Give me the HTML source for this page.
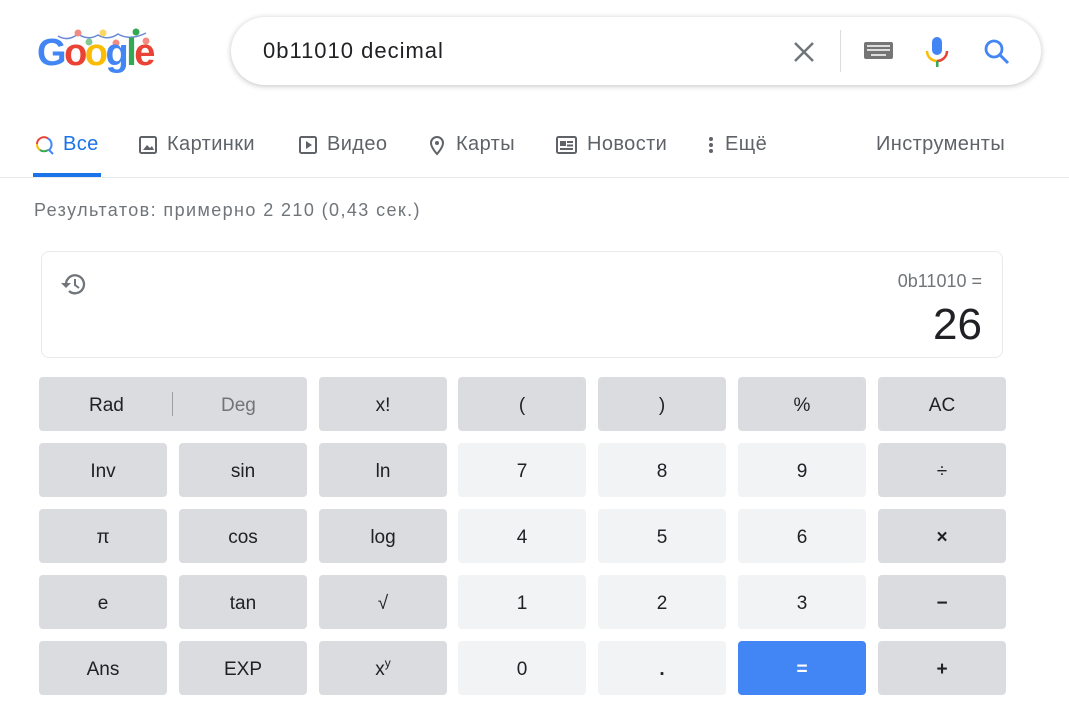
<!DOCTYPE html>
<html><head><meta charset="utf-8"><style>
*{margin:0;padding:0;box-sizing:border-box}
body{width:1069px;height:713px;background:#fff;font-family:"Liberation Sans",Arial,sans-serif;position:relative;overflow:hidden;color:#202124}
.abs{position:absolute}
.logo{left:37px;top:32px;font-size:38px;font-weight:bold;letter-spacing:-2.5px}
.sb{left:231px;top:17px;width:810px;height:68px;border-radius:34px;background:#fff;box-shadow:0 1px 6px rgba(32,33,36,.28)}
.q{left:263px;top:38px;font-size:22px;color:#202124;letter-spacing:1px}
.tab{top:133px;font-size:20px;color:#5f6368;display:flex;align-items:center;gap:9px;letter-spacing:0.4px}
.line{left:0;top:177px;width:1069px;height:1px;background:#e8eaed}
.stats{left:34px;top:200px;font-size:18px;color:#70757a;letter-spacing:1.4px}
.disp{left:41px;top:251px;width:962px;height:107px;border:1px solid #e8eaed;border-radius:8px}
.b{position:absolute;height:54px;width:128px;border-radius:4px;background:#dadce0;display:flex;align-items:center;justify-content:center;font-size:19px;color:#202124;padding-top:3px}
.l{background:#f1f3f4}
</style></head><body>
<svg class="abs" style="left:56px;top:26px" width="100" height="22"><path d="M2 10 Q12 16 22 8 Q32 15 42 9 Q52 15 62 8 Q74 15 90 7" stroke="#6b8ad6" fill="none" stroke-width="1.5"/><circle cx="22" cy="7" r="3.5" fill="#f28b82"/><circle cx="47" cy="7" r="3.5" fill="#fdd663"/><circle cx="33" cy="16" r="3.5" fill="#81c995"/><circle cx="60" cy="17" r="3.5" fill="#f28b82"/><circle cx="80" cy="6" r="3.5" fill="#34a853"/><circle cx="90" cy="15" r="3.5" fill="#f28b82"/></svg>
<div class="abs logo"><span style="color:#4285f4">G</span><span style="color:#ea4335">o</span><span style="color:#fbbc05">o</span><span style="color:#4285f4">g</span><span style="color:#34a853">l</span><span style="color:#ea4335">e</span></div>
<div class="abs sb"></div>
<div class="abs q">0b11010 decimal</div>
<svg class="abs" style="left:792px;top:40px" width="24" height="24"><path d="M3 3L21 21M21 3L3 21" stroke="#70757a" stroke-width="2.5"/></svg>
<div class="abs" style="left:840px;top:30px;width:1px;height:42px;background:#dadce0"></div>
<svg class="abs" style="left:864px;top:40px" width="30" height="20"><rect x="0" y="2" width="29" height="17" rx="2" fill="#757575"/><g fill="#ddd"><rect x="3" y="5" width="23" height="2"/><rect x="3" y="9" width="23" height="2"/><rect x="7" y="14" width="15" height="2"/></g></svg>
<svg class="abs" style="left:924px;top:36px" width="26" height="32"><rect x="8" y="1" width="10" height="18" rx="5" fill="#4285f4"/><path d="M3 15a10 10 0 0 0 10 10" stroke="#fbbc05" stroke-width="2.5" fill="none"/><path d="M13 25a10 10 0 0 0 10-10" stroke="#ea4335" stroke-width="2.5" fill="none"/><rect x="12" y="25" width="2.5" height="6" fill="#34a853"/></svg>
<svg class="abs" style="left:982px;top:37px" width="30" height="30"><circle cx="12" cy="12" r="8" stroke="#4285f4" stroke-width="2.8" fill="none"/><path d="M18 18l8 8" stroke="#4285f4" stroke-width="3"/></svg>

<div class="abs tab" style="left:34px;color:#1a73e8"><svg width="20" height="20"><path d="M14 3.5A7 7 0 0 0 3 9" stroke="#ea4335" stroke-width="2" fill="none"/><path d="M3 9a7 7 0 0 0 3 6" stroke="#fbbc05" stroke-width="2" fill="none"/><path d="M6 15a7 7 0 0 0 8 0" stroke="#34a853" stroke-width="2" fill="none"/><path d="M14 3.5a7 7 0 0 1 1 11.5l4 4" stroke="#4285f4" stroke-width="2" fill="none"/></svg>Все</div>
<div class="abs" style="left:33px;top:173px;width:68px;height:4px;background:#1a73e8"></div>
<div class="abs tab" style="left:138px"><svg width="20" height="20"><rect x="2" y="2" width="16" height="16" rx="1.5" stroke="#5f6368" stroke-width="2" fill="none"/><path d="M5 15l4-5 3 3 2-2 2 4z" fill="#5f6368"/></svg>Картинки</div>
<div class="abs tab" style="left:298px"><svg width="20" height="20"><rect x="2" y="2" width="16" height="16" rx="1.5" stroke="#5f6368" stroke-width="2" fill="none"/><path d="M8 6v8l6-4z" fill="#5f6368"/></svg>Видео</div>
<div class="abs tab" style="left:427px"><svg width="20" height="22"><path d="M10 20s-6-6.5-6-11a6 6 0 0 1 12 0c0 4.5-6 11-6 11z" stroke="#5f6368" stroke-width="2" fill="none"/><circle cx="10" cy="9" r="2" fill="#5f6368"/></svg>Карты</div>
<div class="abs tab" style="left:556px"><svg width="22" height="20"><rect x="1" y="2" width="19" height="16" rx="1.5" stroke="#5f6368" stroke-width="2" fill="none"/><rect x="4" y="6" width="6" height="5" fill="#5f6368"/><rect x="11" y="6" width="6" height="2" fill="#5f6368"/><rect x="11" y="9.5" width="6" height="2" fill="#5f6368"/><rect x="4" y="13" width="13" height="2" fill="#5f6368"/></svg>Новости</div>
<div class="abs tab" style="left:706px"><svg width="10" height="20"><circle cx="5" cy="4" r="2" fill="#5f6368"/><circle cx="5" cy="10" r="2" fill="#5f6368"/><circle cx="5" cy="16" r="2" fill="#5f6368"/></svg>Ещё</div>
<div class="abs tab" style="left:876px">Инструменты</div>
<div class="abs line"></div>
<div class="abs stats">Результатов: примерно 2 210 (0,43 сек.)</div>

<div class="abs disp"></div>
<svg class="abs" style="left:59px;top:271px" width="30" height="28"><path d="M7 13a9 9 0 1 1 3 7" stroke="#70757a" stroke-width="2.3" fill="none"/><path d="M2 12h10l-5 5z" fill="#70757a"/><path d="M16 8v6l4 3" stroke="#70757a" stroke-width="2" fill="none"/></svg>
<div class="abs" style="right:87px;top:271px;font-size:18px;color:#70757a">0b11010 =</div>
<div class="abs" style="right:87px;top:300px;font-size:44px;color:#202124">26</div>

<div class="b" style="left:39px;top:377px;width:268px"><span style="position:absolute;left:50px">Rad</span><span style="position:absolute;left:133px;top:15px;width:1px;height:24px;background:#9aa0a6"></span><span style="position:absolute;left:182px;color:#70757a">Deg</span></div>
<div class="b" style="left:319px;top:377px">x!</div>
<div class="b" style="left:458px;top:377px">(</div>
<div class="b" style="left:598px;top:377px">)</div>
<div class="b" style="left:738px;top:377px">%</div>
<div class="b" style="left:878px;top:377px">AC</div>

<div class="b" style="left:39px;top:443px">Inv</div>
<div class="b" style="left:179px;top:443px">sin</div>
<div class="b" style="left:319px;top:443px">ln</div>
<div class="b l" style="left:458px;top:443px">7</div>
<div class="b l" style="left:598px;top:443px">8</div>
<div class="b l" style="left:738px;top:443px">9</div>
<div class="b" style="left:878px;top:443px">÷</div>

<div class="b" style="left:39px;top:509px">π</div>
<div class="b" style="left:179px;top:509px">cos</div>
<div class="b" style="left:319px;top:509px">log</div>
<div class="b l" style="left:458px;top:509px">4</div>
<div class="b l" style="left:598px;top:509px">5</div>
<div class="b l" style="left:738px;top:509px">6</div>
<div class="b" style="left:878px;top:509px;font-weight:bold">×</div>

<div class="b" style="left:39px;top:575px">e</div>
<div class="b" style="left:179px;top:575px">tan</div>
<div class="b" style="left:319px;top:575px">√</div>
<div class="b l" style="left:458px;top:575px">1</div>
<div class="b l" style="left:598px;top:575px">2</div>
<div class="b l" style="left:738px;top:575px">3</div>
<div class="b" style="left:878px;top:575px;font-weight:bold">−</div>

<div class="b" style="left:39px;top:641px">Ans</div>
<div class="b" style="left:179px;top:641px">EXP</div>
<div class="b" style="left:319px;top:641px">x<span style="font-size:12px;position:relative;top:-7px">y</span></div>
<div class="b l" style="left:458px;top:641px">0</div>
<div class="b l" style="left:598px;top:641px;font-weight:bold">.</div>
<div class="b" style="left:738px;top:641px;background:#4285f4;color:#fff;font-weight:bold">=</div>
<div class="b" style="left:878px;top:641px;font-weight:bold">+</div>
</body></html>
